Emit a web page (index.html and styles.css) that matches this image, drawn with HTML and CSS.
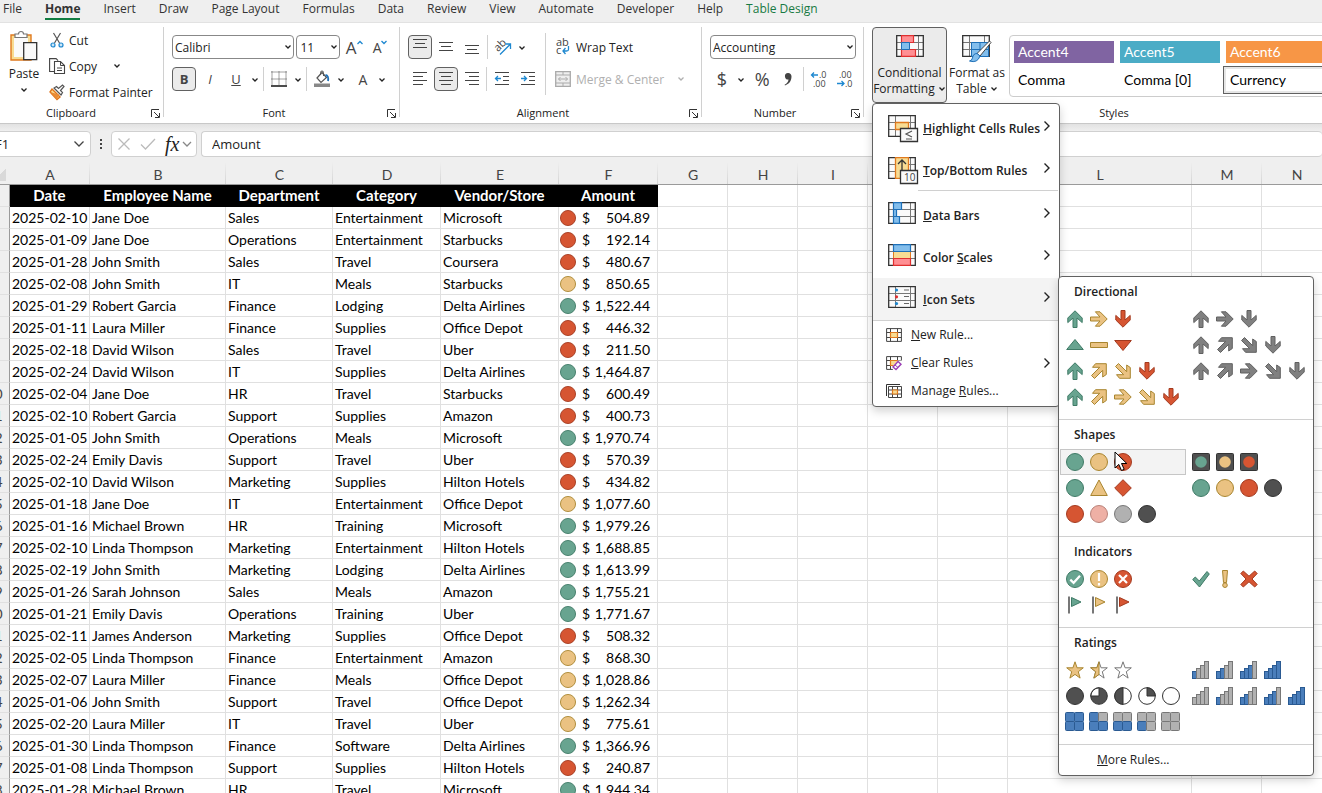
FILE: index.html
```html
<!DOCTYPE html>
<html lang="en">
<head>
    <meta charset="UTF-8">
    <meta name="viewport" content="width=device-width, initial-scale=1.0">
    <title>Expenses - Icon Sets</title>
    <link rel="stylesheet" href="styles.css">
</head>
<body>
    <!-- shared icons -->
    <svg class="defs" aria-hidden="true">
        <symbol id="chev" viewBox="0 0 8 8"><path d="M1.5 2.5 4 5 6.5 2.5" fill="none" stroke="currentColor" stroke-width="1.3"/></symbol>
        <symbol id="right" viewBox="0 0 8 12"><path d="M1.5 1.5 6 6 1.5 10.5" fill="none" stroke="currentColor" stroke-width="1.4"/></symbol>
        <symbol id="launch" viewBox="0 0 9 9"><path d="M8 .5H.5V8M3 3l5 5M8.5 4v4.5H4" fill="none" stroke="#333"/></symbol>
        <symbol id="grid" viewBox="0 0 28 22"><path d="M.7.7h26.6v20.6H.7z" fill="#fafafa"/><path d="M.7 7.5h26.6M.7 14.5h26.6M7.5.7v20.6M22.5.7v20.6" fill="none" stroke="#777"/><path d="M.7.7h26.6v20.6H.7z" fill="none" stroke="#333" stroke-width="1.3"/></symbol>
        <symbol id="up" viewBox="0 0 18 18"><path d="M9 .8 16.2 8v4.6L11 8v9.5H7V8l-5.2 4.6V8z"/></symbol>
        <symbol id="side" viewBox="0 0 18 18"><path d="M17.2 9 10 16.2H5.4L10 11H.5V7H10L5.4 1.8H10z"/></symbol>
        <symbol id="down" viewBox="0 0 18 18"><path d="M9 17.2 1.8 10V5.4L7 10V.5h4V10l5.2-4.6V10z"/></symbol>
        <symbol id="upright" viewBox="0 0 18 18"><path d="M5.5 1.7h10.8v10.8L12.7 15V8.3l-8.2 8.2-3-3 8.2-8.2H2.5z"/></symbol>
        <symbol id="downright" viewBox="0 0 18 18"><path d="M5.5 16.3h10.8V5.5L12.7 3v6.7L4.5 1.5l-3 3 8.2 8.2H2.5z"/></symbol>
        <symbol id="triup" viewBox="0 0 18 18"><path d="M9 3.5 17.3 13.5H.7z"/></symbol>
        <symbol id="tridown" viewBox="0 0 18 18"><path d="M9 14.5 17.3 4.5H.7z"/></symbol>
        <symbol id="dash" viewBox="0 0 18 18"><path d="M.5 6.5h17v5H.5z"/></symbol>
        <symbol id="circle" viewBox="0 0 18 18"><circle cx="9" cy="9" r="8.5"/></symbol>
        <symbol id="triangle" viewBox="0 0 18 18"><path d="M9 1 17.3 16.5H.7z" stroke-linejoin="round"/></symbol>
        <symbol id="diamond" viewBox="0 0 18 18"><path d="M9 .7 17.3 9 9 17.3.7 9z" stroke-linejoin="round"/></symbol>
        <symbol id="light" viewBox="0 0 18 18"><rect x=".5" y=".5" width="17" height="17" rx="1" fill="#505050" stroke="#333"/><circle cx="9" cy="9" r="5.8" stroke="none"/></symbol>
        <symbol id="okc" viewBox="0 0 18 18"><circle cx="9" cy="9" r="8.5"/><path d="M4.3 9.6 7.6 12.8 14 5.8" fill="none" stroke="#fff" stroke-width="2.2"/></symbol>
        <symbol id="warnc" viewBox="0 0 18 18"><circle cx="9" cy="9" r="8.5"/><path d="M9 3v8M9 13v2.5" stroke="#fff" stroke-width="2.2"/></symbol>
        <symbol id="badc" viewBox="0 0 18 18"><circle cx="9" cy="9" r="8.5"/><path d="m5 5 8 8M13 5l-8 8" stroke="#fff" stroke-width="2.2"/></symbol>
        <symbol id="ok" viewBox="0 0 18 18"><path d="M.7 9.5 3.3 7l4 4L15 1.5 17.3 4 7.5 17z"/></symbol>
        <symbol id="warn" viewBox="0 0 18 18"><path d="M6.5.5h5l-1 12h-3z"/><circle cx="9" cy="15.2" r="2.3"/></symbol>
        <symbol id="bad" viewBox="0 0 18 18"><path d="M3.3 1 9 6.2 14.7 1 17.2 3.5 12 9l5.2 5.5-2.5 2.5L9 11.8 3.3 17 .8 14.5 6 9 .8 3.5z"/></symbol>
        <symbol id="flag" viewBox="0 0 18 18"><path d="M3 .5v17" stroke="#777" stroke-width="2"/><path d="M5.5 1.500 15 6 5.500 10.500z"/></symbol>
        <symbol id="star" viewBox="0 0 18 18"><path d="m9 .8 2.1 6h6.2l-5 3.900 1.8 6.400L9 13.400l-5.100 3.700 1.800-6.400-5-3.900h6.200z"/></symbol>
        <symbol id="starhalf" viewBox="0 0 18 18"><path d="m9 .8 2.100 6h6.200l-5 3.900 1.800 6.400L9 13.400l-5.100 3.700 1.800-6.400-5-3.900h6.200z" fill="#fff" stroke="#777"/><path d="M9 .8v12.600l-5.100 3.700 1.800-6.400-5-3.900h6.200z"/></symbol>
        <symbol id="pie3" viewBox="0 0 18 18"><circle cx="9" cy="9" r="8.3" fill="#505050"/><path d="M9 9H.9A8.1 8.1 0 0 1 9 .9z" fill="#fff"/></symbol>
        <symbol id="pie2" viewBox="0 0 18 18"><circle cx="9" cy="9" r="8.3" fill="#fff"/><path d="M9 .7a8.3 8.3 0 0 0 0 16.6z"/></symbol>
        <symbol id="pie1" viewBox="0 0 18 18"><circle cx="9" cy="9" r="8.3" fill="#fff"/><path d="M9 9V.7A8.3 8.3 0 0 1 17.3 9z"/></symbol>
    </svg>

    <nav class="tabs">
        <a href="#">File</a>
        <a href="#" class="active">Home</a>
        <a href="#">Insert</a>
        <a href="#">Draw</a>
        <a href="#">Page Layout</a>
        <a href="#">Formulas</a>
        <a href="#">Data</a>
        <a href="#">Review</a>
        <a href="#">View</a>
        <a href="#">Automate</a>
        <a href="#">Developer</a>
        <a href="#">Help</a>
        <a href="#" class="design">Table Design</a>
    </nav>

    <div class="ribbon">
        <!-- Clipboard -->
        <section class="group clipboard">
            <div class="tools">
                <button class="paste">
                    <svg width="28" height="32" viewBox="0 0 28 32"><path d="M1 5h20v25H1z" fill="#f8dc93" stroke="#e07a1f" stroke-width="1.4"/><path d="M4 8h14v19H4z" fill="#fafafa"/><path d="M5 7.500V4h3.500a2.500 2.500 0 0 1 5 0H17v3.500z" fill="#fff" stroke="#777" stroke-width="1.2"/><path d="M13.700 12.700h13v17h-13z" fill="#fafafa" stroke="#333" stroke-width="1.3"/></svg>
                    <span>Paste</span>
                    <svg class="chev"><use href="#chev"/></svg>
                </button>
                <div class="stack">
                    <button><svg width="16" height="16" viewBox="0 0 16 16"><path d="M4.500 1 10.500 11M11.500 1 5.500 11" stroke="#555" stroke-width="1.2"/><circle cx="4" cy="13" r="2" fill="#cde6f7" stroke="#1e88d0" stroke-width="1.2"/><circle cx="12" cy="13" r="2" fill="#cde6f7" stroke="#1e88d0" stroke-width="1.2"/></svg>Cut</button>
                    <button><svg width="16" height="16" viewBox="0 0 16 16"><path d="M5 13.500H.6V.6h6.500l2 2" fill="none" stroke="#444" stroke-width="1.1"/><path d="M5.500 3.500h6l4 4v8h-10z" fill="#fff" stroke="#444" stroke-width="1.1"/><path d="M11.500 3.500v4h4M8 10h5M8 12.500h5" fill="none" stroke="#444"/></svg>Copy<svg class="chev far"><use href="#chev"/></svg></button>
                    <button><svg width="16" height="16" viewBox="0 0 16 16"><path d="M3 5 11 13 8 15.500 1 8z" fill="#f8dc93" stroke="#e0731a" stroke-width="1.400"/><path d="M1 8l7 7.500 2-5z" fill="#e98b36"/><path d="M5 4l7 7 1.500-2.500-2-2 3.500-4-1.500-1.500-4 3.500L7.500 2.500z" fill="#fff" stroke="#555" stroke-width="1.200"/></svg>Format Painter</button>
                </div>
            </div>
            <footer>Clipboard<button class="launch" aria-label="Clipboard settings"><svg><use href="#launch"/></svg></button></footer>
        </section>

        <!-- Font -->
        <section class="group font">
            <div class="tools rows">
                <div class="row">
                    <select class="name" aria-label="Font"><option>Calibri</option></select>
                    <select class="size" aria-label="Font size"><option>11</option></select>
                    <button class="tool" aria-label="Increase font size"><span class="biga">A</span><svg width="6" height="5" viewBox="0 0 6 5"><path d="M.5 4 3 1.500 5.500 4" fill="none" stroke="#1e88d0" stroke-width="1.300"/></svg></button>
                    <button class="tool" aria-label="Decrease font size"><span class="smalla">A</span><svg width="6" height="5" viewBox="0 0 6 5"><path d="M.5 1 3 3.500 5.500 1" fill="none" stroke="#1e88d0" stroke-width="1.300"/></svg></button>
                </div>
                <div class="row">
                    <button class="tool on"><b>B</b></button>
                    <button class="tool"><i>I</i></button>
                    <button class="tool"><u>U</u></button>
                    <button class="drop" aria-label="Underline options"><svg class="chev"><use href="#chev"/></svg></button>
                    <span class="bar"></span>
                    <button class="tool" aria-label="Borders"><svg width="16" height="16" viewBox="0 0 16 16"><path d="M.5 1h15M.5 8h15M1 .5v13M8 .5v13M15 .5v13" fill="none" stroke="#444" stroke-dasharray="1 1"/><path d="M0 15h16" stroke="#111" stroke-width="1.500"/></svg></button>
                    <button class="drop" aria-label="Border options"><svg class="chev"><use href="#chev"/></svg></button>
                    <span class="bar"></span>
                    <button class="tool" aria-label="Fill color"><svg width="16" height="16" viewBox="0 0 16 16"><path d="M3 7 8 1.500l4.500 5L7 11.500z" fill="#fff" stroke="#555" stroke-width="1.200"/><path d="M6.500 4V1.500a1.500 1.500 0 0 1 3 0V5" fill="none" stroke="#555"/><path d="M11.500 4q3.500.5 2.500 6" fill="none" stroke="#1e70b8" stroke-width="1.800"/><path d="M0 12.500h16V16H0z" fill="#888"/></svg></button>
                    <button class="drop" aria-label="Fill options"><svg class="chev"><use href="#chev"/></svg></button>
                    <button class="tool color">A</button>
                    <button class="drop" aria-label="Font color options"><svg class="chev"><use href="#chev"/></svg></button>
                </div>
            </div>
            <footer>Font<button class="launch" aria-label="Font settings"><svg><use href="#launch"/></svg></button></footer>
        </section>

        <!-- Alignment -->
        <section class="group align">
            <div class="tools">
                <div class="rows">
                    <div class="row">
                        <button class="tool on" aria-label="Top align"><svg width="16" height="16" viewBox="0 0 16 16"><path d="M1 .5h14M3 4.500h10M1 8.500h14" stroke="#444"/></svg></button>
                        <button class="tool" aria-label="Middle align"><svg width="16" height="16" viewBox="0 0 16 16"><path d="M1 3.500h14M3 7.500h10M1 11.500h14" stroke="#444"/></svg></button>
                        <button class="tool" aria-label="Bottom align"><svg width="16" height="16" viewBox="0 0 16 16"><path d="M1 6.500h14M3 10.500h10M1 14.500h14" stroke="#444"/></svg></button>
                        <span class="bar"></span>
                        <button class="tool" aria-label="Orientation"><svg width="18" height="18" viewBox="0 0 18 18"><text x="-6" y="3" class="ab" transform="translate(6 8) rotate(-45)">ab</text><path d="M6 16.500 16 6.500M11.500 6H16.500V11" fill="none" stroke="#1e88d0" stroke-width="1.300"/></svg></button>
                        <button class="drop" aria-label="Orientation options"><svg class="chev"><use href="#chev"/></svg></button>
                    </div>
                    <div class="row">
                        <button class="tool" aria-label="Align left"><svg width="16" height="16" viewBox="0 0 16 16"><path d="M1 1.500h14M1 5.500h10M1 9.500h14M1 13.500h10" stroke="#444"/></svg></button>
                        <button class="tool on" aria-label="Center"><svg width="16" height="16" viewBox="0 0 16 16"><path d="M1 1.500h14M3 5.500h10M1 9.500h14M3 13.500h10" stroke="#444"/></svg></button>
                        <button class="tool" aria-label="Align right"><svg width="16" height="16" viewBox="0 0 16 16"><path d="M1 1.500h14M5 5.500h10M1 9.500h14M5 13.500h10" stroke="#444"/></svg></button>
                        <span class="bar"></span>
                        <button class="tool" aria-label="Decrease indent"><svg width="16" height="16" viewBox="0 0 16 16"><path d="M1 1.500h14M9 5.500h6M9 9.500h6M1 13.500h14" stroke="#444"/><path d="M7 7.500H1.500M4 5 1.500 7.500 4 10" fill="none" stroke="#1e88d0" stroke-width="1.300"/></svg></button>
                        <button class="tool" aria-label="Increase indent"><svg width="16" height="16" viewBox="0 0 16 16"><path d="M1 1.500h14M9 5.500h6M9 9.500h6M1 13.500h14" stroke="#444"/><path d="M1 7.500h5.500M4 5l2.500 2.500L4 10" fill="none" stroke="#1e88d0" stroke-width="1.300"/></svg></button>
                    </div>
                </div>
                <span class="bar tall"></span>
                <div class="rows wide">
                    <button class="label"><svg width="16" height="16" viewBox="0 0 16 16"><text x="1" y="7" class="ab">ab</text><text x="1" y="15" class="ab">c</text><path d="M13.500 7v3.500q0 1.500-2 1.500H8M10.500 9 8 12l2.500 3" fill="none" stroke="#1e88d0" stroke-width="1.300"/></svg>Wrap Text</button>
                    <button class="label" disabled><svg width="16" height="16" viewBox="0 0 16 16"><path d="M.7.7h14.600v14.600H.7z" fill="#eee" stroke="#aaa" stroke-width="1.300"/><path d="M1 4h14M1 12h14M8 1v3M8 12v3M3.500 8h9M5.500 6l-2 2 2 2M10.500 6l2 2-2 2" fill="none" stroke="#aaa"/></svg>Merge &amp; Center<svg class="chev far"><use href="#chev"/></svg></button>
                </div>
            </div>
            <footer>Alignment<button class="launch" aria-label="Alignment settings"><svg><use href="#launch"/></svg></button></footer>
        </section>

        <!-- Number -->
        <section class="group number">
            <div class="tools rows">
                <div class="row"><select class="format" aria-label="Number format"><option>Accounting</option></select></div>
                <div class="row">
                    <button class="tool sym">$</button>
                    <button class="drop" aria-label="Currency options"><svg class="chev"><use href="#chev"/></svg></button>
                    <button class="tool sym pct">%</button>
                    <button class="tool" aria-label="Comma style"><svg width="10" height="14" viewBox="0 0 10 14"><path d="M5 1a3.300 3.300 0 0 1 3.500 3.500C8.500 9 6 12 2 13.500l-.4-.8C4 11.500 5.300 10 5.500 7.600A3.300 3.300 0 1 1 5 1z" fill="#444"/></svg></button>
                    <span class="bar"></span>
                    <button class="tool" aria-label="Increase decimal"><svg width="17" height="18" viewBox="0 0 17 18"><text x="9" y="8" class="dec">.0</text><text x="3" y="17" class="dec">.00</text><path d="M8 5H1.500M4 2.500 1.500 5 4 7.500" fill="none" stroke="#1e88d0" stroke-width="1.300"/></svg></button>
                    <button class="tool" aria-label="Decrease decimal"><svg width="17" height="18" viewBox="0 0 17 18"><text x="3" y="8" class="dec">.00</text><text x="9" y="17" class="dec">.0</text><path d="M1 13.500h7M5.500 11 8 13.500 5.500 16" fill="none" stroke="#1e88d0" stroke-width="1.300"/></svg></button>
                </div>
            </div>
            <footer>Number<button class="launch" aria-label="Number settings"><svg><use href="#launch"/></svg></button></footer>
        </section>

        <!-- Styles -->
        <section class="group styles">
            <div class="tools">
                <button class="big open">
                    <svg width="28" height="22" viewBox="0 0 28 22"><use href="#grid"/><path d="M5.500.7h12v6.800h-12zM5.500 14.500h14v6.800h-14z" fill="#ff8f93" stroke="#e03030" stroke-width="1.200"/><path d="M5.500 7.500h8v7h-8z" fill="#83beec" stroke="#1e70b8"/></svg>
                    <span>Conditional<br>Formatting <svg class="chev"><use href="#chev"/></svg></span>
                </button>
                <button class="big">
                    <svg width="30" height="28" viewBox="0 0 30 28"><use href="#grid" width="28" height="22"/><path d="M9.500 7.500h17v14h-17z" fill="#83beec" stroke="#1e70b8"/><path d="M9.500 14.500h17M18 7.500v14" stroke="#1e70b8"/><path d="M29 7.500 18 21l-3-2.500L27.500 6z" fill="#fff" stroke="#444"/><path d="M15 18.500q-4 0-4.500 4.500-1 3-3 3 8 2.500 10.500-5z" fill="#83beec" stroke="#1e70b8"/></svg>
                    <span>Format as<br>Table <svg class="chev"><use href="#chev"/></svg></span>
                </button>
                <div class="gallery">
                    <button class="accent4">Accent4</button>
                    <button class="accent5">Accent5</button>
                    <button class="accent6">Accent6</button>
                    <button>Comma</button>
                    <button>Comma [0]</button>
                    <button class="picked">Currency</button>
                </div>
            </div>
            <footer>Styles</footer>
        </section>
    </div>

    <div class="formulabar">
        <button class="namebox">F1<svg width="12" height="12" viewBox="0 0 12 12"><path d="M1.500 3.500 6 8l4.500-4.500" fill="none" stroke="#444" stroke-width="1.300"/></svg></button>
        <span class="dots"></span>
        <div class="fx">
            <button aria-label="Cancel"><svg width="14" height="14" viewBox="0 0 14 14"><path d="m1.500 1.500 11 11M12.500 1.500l-11 11" stroke="#bbb" stroke-width="1.300"/></svg></button>
            <button aria-label="Enter"><svg width="16" height="14" viewBox="0 0 16 14"><path d="m1 7.500 4.500 4.500L15 2" fill="none" stroke="#bbb" stroke-width="1.300"/></svg></button>
            <button class="fn"><i>fx</i></button>
            <button aria-label="Function list"><svg width="10" height="10" viewBox="0 0 10 10"><path d="m1 3 4 4 4-4" fill="none" stroke="#888" stroke-width="1.300"/></svg></button>
        </div>
        <input type="text" value="Amount" aria-label="Formula bar">
    </div>

    <table class="sheet">
        <colgroup>
            <col class="c30"><col class="c80"><col class="c136"><col class="c107"><col class="c108"><col class="c118"><col class="c99">
            <col class="c70"><col class="c70"><col class="c70"><col class="c70"><col class="c70"><col class="c184"><col class="c70"><col class="c70">
        </colgroup>
        <thead>
            <tr>
                <th class="corner"></th><th>A</th><th>B</th><th>C</th><th>D</th><th>E</th><th>F</th><th>G</th><th>H</th><th>I</th><th>J</th><th>K</th><th>L</th><th>M</th><th>N</th>
            </tr>
        </thead>
        <tbody id="rows"></tbody>
    </table>

    <!-- Conditional Formatting menu -->
    <div class="menu">
        <button class="item"><svg width="30" height="28" viewBox="0 0 30 28"><use href="#grid" width="28" height="22"/><path d="M7.500 7.500h13v7h-13z" fill="#f8dc93" stroke="#e07a1f" stroke-width="1.300"/><path d="M12.500 13.500h17v13h-17z" fill="#fafafa" stroke="#333" stroke-width="1.300"/><path d="m24 16-6 3 6 3M18 24h6" fill="none" stroke="#555" stroke-width="1.200"/></svg><span><u>H</u>ighlight Cells Rules</span><svg class="right"><use href="#right"/></svg></button>
        <button class="item"><svg width="30" height="28" viewBox="0 0 30 28"><use href="#grid" width="28" height="22"/><path d="M7.500.7h13v20.600h-13z" fill="#f8dc93" stroke="#e07a1f" stroke-width="1.300"/><path d="M14 16V3M10 7l4-4 4 4" fill="none" stroke="#333" stroke-width="1.300"/><path d="M12.500 13.500h17v13h-17z" fill="#fafafa" stroke="#333" stroke-width="1.300"/><text x="16" y="24" class="ten">10</text></svg><span><u>T</u>op/Bottom Rules</span><svg class="right"><use href="#right"/></svg></button>
        <hr class="inset">
        <button class="item"><svg width="30" height="28" viewBox="0 0 30 28"><use href="#grid" width="28" height="22"/><path d="M5.500.7h8v6.800h-8zM5.500 7.500h3v7h-3zM5.500 14.500h6v6.800h-6z" fill="#83beec" stroke="#1e70b8" stroke-width="1.200"/></svg><span><u>D</u>ata Bars</span><svg class="right"><use href="#right"/></svg></button>
        <button class="item"><svg width="30" height="28" viewBox="0 0 30 28"><use href="#grid" width="28" height="22"/><path d="M5.500 7.500h17v7h-17z" fill="#f8dc93" stroke="#e07a1f"/><path d="M5.500.7h17v6.800h-17z" fill="#83beec" stroke="#1e70b8" stroke-width="1.200"/><path d="M5.500 14.500h17v6.800h-17z" fill="#ff8f93" stroke="#e03030" stroke-width="1.200"/></svg><span>Color <u>S</u>cales</span><svg class="right"><use href="#right"/></svg></button>
        <button class="item hover"><svg width="30" height="28" viewBox="0 0 30 28"><use href="#grid" width="28" height="22"/><path d="M8 1.400h14v5.500H8zM8 8h14v6H8zM8 15h14v5.600H8z" fill="#fafafa"/><path d="M16 4h5M16 10.500h5M16 17.500h5" stroke="#666"/><circle cx="8.500" cy="4" r="1.600" fill="#1e88d0"/><circle cx="8.500" cy="10.800" r="1.600" fill="#e03030"/><circle cx="8.500" cy="17.600" r="1.600" fill="#1e88d0"/></svg><span><u>I</u>con Sets</span><svg class="right"><use href="#right"/></svg></button>
        <hr>
        <button class="item small"><svg width="16" height="14" viewBox="0 0 16 14"><path d="M.6.6h14.800v12.800H.6zM.6 4.500h14.800M.6 9.500h14.800M4.500.6v12.800M11.500.6v12.800" fill="#fff" stroke="#444"/><path d="M4.500 4.500h7v5h-7z" fill="#f8dc93" stroke="#e07a1f" stroke-width="1.200"/></svg><span><u>N</u>ew Rule...</span></button>
        <button class="item small"><svg width="16" height="14" viewBox="0 0 16 14"><path d="M.6.6h14.800v12.800H.6zM.6 4.500h14.800M.6 9.500h14.800M4.500.6v12.800M11.500.6v12.800" fill="#fff" stroke="#444"/><path d="M4.500 4.500h7v5h-7z" fill="#f8dc93" stroke="#e07a1f" stroke-width="1.200"/><path d="m6 11 6-6.500h4V14H7z" fill="#fff"/><path d="m7 11 5-5.500 3 2.800L10 13.500z" fill="#fff" stroke="#9b3fb5" stroke-width="1.400"/><path d="m9 9 3 2.500" stroke="#9b3fb5"/></svg><span><u>C</u>lear Rules</span><svg class="right"><use href="#right"/></svg></button>
        <button class="item small"><svg width="16" height="14" viewBox="0 0 16 14"><path d="M.5 12V.5H14" fill="none" stroke="#333"/><path d="M2.500 2.500h13v11h-13zM2.500 6h13M2.500 10h13M6.500 2.500v11M11.500 2.500v11" fill="#fff" stroke="#444"/><path d="M6.500 6h5v4h-5z" fill="#f8dc93" stroke="#e07a1f" stroke-width="1.200"/></svg><span>Manage <u>R</u>ules...</span></button>
    </div>

    <!-- Icon Sets submenu, filled in by script.js -->
    <div class="submenu">
        <h2>Directional</h2>
        <div class="sets" id="directional"></div>
        <h2>Shapes</h2>
        <div class="sets" id="shapes"></div>
        <h2>Indicators</h2>
        <div class="sets" id="indicators"></div>
        <h2>Ratings</h2>
        <div class="sets" id="ratings"></div>
        <button class="more"><span><u>M</u>ore Rules...</span></button>
    </div>

    <svg class="cursor" width="14" height="21" viewBox="0 0 14 21"><path d="M1 1v16l3.800-3.600L7.500 19.500l2.700-1.200L7.500 12.500h5.300z" fill="#fff" stroke="#000"/></svg>

    <script src="script.js"></script>
</body>
</html>
```
FILE: styles.css
```css
* {
    box-sizing: border-box;
}
body {
    margin: 0;
    height: 100vh;
    overflow: hidden;
    position: relative;
    background: #efefef;
    color: #222;
    font-family: "Open Sans", "Noto Sans", sans-serif;
    font-size: 12px;
}
button, select, input {
    font: inherit;
    color: inherit;
}
button {
    padding: 0;
    border: 0;
    background: none;
}
svg {
    flex: none;
    overflow: visible;
}
.defs {
    display: none;
}
.chev {
    width: 8px;
    height: 8px;
}

/* tabs */
.tabs {
    display: flex;
    gap: 23px;
    height: 23px;
    padding-left: 3px;
    border-bottom: 1px solid #e2e2e2;
}
.tabs a {
    height: 20px;
    line-height: 17px;
    color: #333;
    text-decoration: none;
    white-space: nowrap;
}
.tabs .active {
    font-weight: bold;
    border-bottom: 2px solid #107c41;
}
.tabs .design {
    color: #187a43;
}

/* ribbon */
.ribbon {
    display: flex;
    height: 101px;
    padding-top: 4px;
    overflow: hidden;
    background: #fff;
    border-bottom: 1px solid #c8c8c8;
}
.group {
    flex: none;
    background: linear-gradient(#d0d0d0, #d0d0d0) no-repeat right top / 1px 90px;
}
.clipboard { width: 164px; }
.font { width: 236px; }
.align { width: 302px; }
.number { width: 162px; }
.styles {
    width: 500px;
    background: none;
}
.tools {
    display: flex;
    height: 77px;
    padding: 0 8px;
}
.group footer {
    position: relative;
    height: 18px;
    line-height: 18px;
    padding-right: 16px;
    text-align: center;
    font-size: 11px;
}
.clipboard footer {
    padding-right: 22px;
}
.styles footer {
    padding: 0;
}
.launch {
    position: absolute;
    right: 4px;
    top: 5px;
    width: 9px;
    height: 9px;
    line-height: 0;
}
.launch svg {
    width: 9px;
    height: 9px;
}
.paste {
    display: flex;
    flex-direction: column;
    align-items: center;
    width: 28px;
    margin: 3px 11px 0 2px;
    line-height: 16px;
}
.paste span {
    margin: 4px 0;
}
.stack button {
    display: flex;
    align-items: center;
    gap: 4px;
    height: 26px;
    white-space: nowrap;
}
.far {
    margin-left: 12px;
}
.label .far {
    margin-left: 8px;
}
.rows {
    display: flex;
    flex-direction: column;
    gap: 8px;
    padding-top: 8px;
}
.row {
    display: flex;
    align-items: center;
    height: 24px;
    gap: 2px;
}
.tool {
    display: flex;
    align-items: center;
    justify-content: center;
    width: 24px;
    height: 24px;
    border-radius: 4px;
    font-size: 13px;
    color: #444;
}
.tool.on {
    background: #ebebeb;
    border: 1px solid #616161;
}
.biga { font-size: 17px; }
.smalla { font-size: 14px; }
.biga + svg, .smalla + svg {
    align-self: flex-start;
    margin-top: 5px;
}
.color { font-size: 14px; }
.font .color {
    margin-left: 3px;
}
.sym { font-size: 18px; }
.pct { margin-left: 3px; }
.drop {
    width: 10px;
    height: 24px;
    text-align: center;
}
.bar {
    width: 1px;
    height: 24px;
    margin: 0 1px;
    background: #d0d0d0;
}
.tall {
    height: 62px;
    margin: 6px 9px 0 5px;
}
.align .tools .rows { width: 132px; }
.align .tools .wide { width: auto; }
.label {
    display: flex;
    align-items: center;
    gap: 5px;
    height: 24px;
    white-space: nowrap;
}
.label:disabled {
    color: #b0b0b0;
}
.ab {
    font-size: 11px;
    fill: #444;
}
.dec {
    font-size: 9px;
    fill: #444;
}
.ten {
    font-size: 10px;
    font-weight: normal;
    fill: #444;
}
select {
    appearance: none;
    height: 24px;
    padding: 0 2px;
    border: 1px solid #888;
    border-radius: 4px;
    background: #fff url("data:image/svg+xml,%3Csvg xmlns='http://www.w3.org/2000/svg' width='8' height='8'%3E%3Cpath d='M1.500 2.500 4 5 6.500 2.500' fill='none' stroke='%23222' stroke-width='1.300'/%3E%3C/svg%3E") no-repeat right 1px center;
}
.name { width: 123px; }
.size {
    width: 44px;
    padding: 0 3px;
}
.format { width: 147px; }
.big {
    display: flex;
    flex-direction: column;
    align-items: center;
    gap: 8px;
    height: 76px;
    padding-top: 8px;
    line-height: 16px;
    white-space: nowrap;
    width: 60px;
}
.big + .big > svg {
    margin-bottom: -6px;
}
.open {
    width: 75px;
    padding-top: 7px;
    border: 1px solid #616161;
    border-radius: 4px;
    background: #ebebeb;
}
.gallery {
    display: grid;
    grid-template-columns: 100px 100px 100px;
    grid-template-rows: 22px 28px;
    gap: 3px 6px;
    flex: none;
    height: 62px;
    width: 340px;
    margin: 8px 0 0 2px;
    padding: 5px 4px;
    border: 1px solid #ccc;
    border-radius: 4px;
    font-family: Lato, sans-serif;
    font-size: 14px;
}
.gallery button {
    padding: 0 0 2px 4px;
    text-align: left;
    color: #000;
}
.gallery .accent4 { background: #8064a2; color: #fff; }
.gallery .accent5 { background: #4bacc6; color: #fff; }
.gallery .accent6 { background: #f79646; color: #fff; }
.gallery .picked {
    margin-left: -3px;
    border: 1px solid #616161;
    box-shadow: inset 0 0 0 2px #e6e6e6;
    padding-left: 6px;
}

/* formula bar */
.formulabar {
    display: flex;
    height: 38px;
    padding-top: 7px;
    background: linear-gradient(#e2e2e2, #efefef 7px);
    font-size: 13px;
}
.formulabar input, .namebox, .fx {
    height: 26px;
    background: #fff;
    border: 1px solid #d0d0d0;
    border-radius: 4px;
}
.namebox {
    display: flex;
    align-items: center;
    justify-content: space-between;
    width: 111px;
    margin-left: -20px;
    padding: 0 5px 0 14px;
}
.dots {
    width: 2px;
    height: 10px;
    margin: 8px 9px;
    background: repeating-linear-gradient(#444 0 2px, transparent 2px 4px);
}
.fx {
    display: flex;
    align-items: center;
    gap: 9px;
    width: 86px;
    padding-left: 5px;
}
.fx button {
    line-height: 0;
}
.fx .fn {
    font: 20px "Liberation Serif", serif;
    line-height: 20px;
    margin-right: -6px;
}
.formulabar input {
    flex: 1;
    margin-left: 4px;
    padding: 0 10px;
    border-right: 0;
}

/* sheet */
.sheet {
    width: 1352px;
    margin-left: -20px;
    table-layout: fixed;
    border-spacing: 0;
    background: #fff;
    color: #000;
    font-family: Lato, sans-serif;
    font-size: 14px;
}
.c30 { width: 30px; }
.c70 { width: 70px; }
.c80 { width: 80px; }
.c99 { width: 99px; }
.c107 { width: 107px; }
.c108 { width: 108px; }
.c118 { width: 118px; }
.c136 { width: 136px; }
.c184 { width: 184px; }
.sheet th, .sheet td {
    height: 22px;
    padding: 0 2px;
    line-height: 21px;
    border-right: 1px solid #e0e0e0;
    border-bottom: 1px solid #e0e0e0;
    white-space: nowrap;
}
.sheet thead th {
    height: 23px;
    background: linear-gradient(#efefef, #d4d4d4) no-repeat right / 1px 100% #efefef;
    border-right: 0;
    border-bottom-color: #9a9a9a;
    color: #444;
    font-weight: normal;
    padding-top: 3px;
    line-height: 19px;
}
.sheet thead .corner {
    background: linear-gradient(135deg, #efefef 50%, #d9d9d9 50%) no-repeat 14px 7px / 12px 12px #efefef;
}
.sheet tbody th {
    padding: 0;
    background: #efefef;
    border-right-color: #9a9a9a;
    color: #444;
    font-weight: normal;
    text-align: center;
}
.sheet .head {
    background: #000;
    border-color: #000;
    color: #fff;
    font-size: 15px;
    font-weight: bold;
    text-align: center;
}
.money {
    display: flex;
    align-items: center;
    padding: 0 5px 0 0;
}
.money svg {
    width: 16px;
    height: 16px;
    margin: 0 6px 0 -1px;
}
.money span {
    margin-left: auto;
}

/* menus */
.menu, .submenu {
    position: absolute;
    background: #fff;
    border: 1px solid #616161;
    border-radius: 4px;
    box-shadow: 0 4px 10px rgba(0, 0, 0, 0.18);
}
.menu {
    left: 872px;
    top: 103px;
    width: 188px;
    padding: 3px 0 1px;
}
.menu hr {
    height: 1px;
    margin: 0;
    border: 0;
    background: #d0d0d0;
}
.menu .inset {
    margin: -1px 1px 3px 45px;
}
.item {
    display: flex;
    width: 100%;
    height: 42px;
    padding: 8px 8px 0 15px;
    font-weight: 600;
    line-height: 27px;
    white-space: nowrap;
}
.item span {
    margin-left: 5px;
}
.item .right {
    width: 8px;
    height: 12px;
    margin: 5px 0 0 auto;
}
.hover {
    background: #f3f3f3;
}
.item.small {
    height: 28px;
    padding: 0 8px 1px 13px;
    align-items: center;
    font-weight: normal;
}
.item.small span {
    margin-left: 9px;
}
.item.small .right {
    margin-top: 0;
}
.submenu {
    left: 1058px;
    top: 276px;
    width: 256px;
}
.submenu h2 {
    margin: 0;
    padding-left: 15px;
    font-size: 12px;
    font-weight: 600;
    line-height: 29px;
}
.sets {
    display: grid;
    grid-template-columns: 126px 126px;
    padding: 0 1px 9px;
    border-bottom: 1px solid #d0d0d0;
}
.sets button {
    display: flex;
    align-items: center;
    gap: 6px;
    height: 26px;
    padding-left: 5px;
    border: 1px solid transparent;
}
.sets .hot {
    background: #f3f3f3;
    border-color: #c6c6c6;
}
.sets svg {
    width: 18px;
    height: 18px;
}
.more {
    width: 100%;
    height: 30px;
    padding: 0 0 2px 38px;
    text-align: left;
}
.cursor {
    position: absolute;
    left: 1114px;
    top: 451px;
}

/* icon colours */
.green { fill: #68a490; stroke: #3f7a66; }
.yellow { fill: #eac282; stroke: #a8852f; }
.red { fill: #d65532; stroke: #a33a1f; }
.gray { fill: #808080; stroke: #606060; }
.pink { fill: #eeb0a5; stroke: #b9837a; }
.silver { fill: #b1b1b1; stroke: #777; }
.black { fill: #505050; stroke: #333; }
.white { fill: #fff; stroke: #777; }
.hollow { fill: #fff; stroke: #333; }
.blue { fill: #4a7ebb; stroke: #2a5a92; }
```
FILE: script.js
```js
// rows of the expense table: date, name, department, category, vendor, amount, icon
const expenses = [
    ["2025-02-10", "Jane Doe", "Sales", "Entertainment", "Microsoft", "504.89", "red"],
    ["2025-01-09", "Jane Doe", "Operations", "Entertainment", "Starbucks", "192.14", "red"],
    ["2025-01-28", "John Smith", "Sales", "Travel", "Coursera", "480.67", "red"],
    ["2025-02-08", "John Smith", "IT", "Meals", "Starbucks", "850.65", "yellow"],
    ["2025-01-29", "Robert Garcia", "Finance", "Lodging", "Delta Airlines", "1,522.44", "green"],
    ["2025-01-11", "Laura Miller", "Finance", "Supplies", "Office Depot", "446.32", "red"],
    ["2025-02-18", "David Wilson", "Sales", "Travel", "Uber", "211.50", "red"],
    ["2025-02-24", "David Wilson", "IT", "Supplies", "Delta Airlines", "1,464.87", "green"],
    ["2025-02-04", "Jane Doe", "HR", "Travel", "Starbucks", "600.49", "red"],
    ["2025-02-10", "Robert Garcia", "Support", "Supplies", "Amazon", "400.73", "red"],
    ["2025-01-05", "John Smith", "Operations", "Meals", "Microsoft", "1,970.74", "green"],
    ["2025-02-24", "Emily Davis", "Support", "Travel", "Uber", "570.39", "red"],
    ["2025-02-10", "David Wilson", "Marketing", "Supplies", "Hilton Hotels", "434.82", "red"],
    ["2025-01-18", "Jane Doe", "IT", "Entertainment", "Office Depot", "1,077.60", "yellow"],
    ["2025-01-16", "Michael Brown", "HR", "Training", "Microsoft", "1,979.26", "green"],
    ["2025-02-10", "Linda Thompson", "Marketing", "Entertainment", "Hilton Hotels", "1,688.85", "green"],
    ["2025-02-19", "John Smith", "Marketing", "Lodging", "Delta Airlines", "1,613.99", "green"],
    ["2025-01-26", "Sarah Johnson", "Sales", "Meals", "Amazon", "1,755.21", "green"],
    ["2025-01-21", "Emily Davis", "Operations", "Training", "Uber", "1,771.67", "green"],
    ["2025-02-11", "James Anderson", "Marketing", "Supplies", "Office Depot", "508.32", "red"],
    ["2025-02-05", "Linda Thompson", "Finance", "Entertainment", "Amazon", "868.30", "yellow"],
    ["2025-02-07", "Laura Miller", "Finance", "Meals", "Office Depot", "1,028.86", "yellow"],
    ["2025-01-06", "John Smith", "Support", "Travel", "Office Depot", "1,262.34", "yellow"],
    ["2025-02-20", "Laura Miller", "IT", "Travel", "Uber", "775.61", "yellow"],
    ["2025-01-30", "Linda Thompson", "Finance", "Software", "Delta Airlines", "1,366.96", "green"],
    ["2025-01-08", "Linda Thompson", "Support", "Supplies", "Hilton Hotels", "240.87", "red"],
    ["2025-01-28", "Michael Brown", "HR", "Travel", "Microsoft", "1,944.34", "green"]
];

function icon(name, color) {
    return `<svg viewBox="0 0 18 18" class="${color}"><use href="#${name}"/></svg>`;
}

const empty = "<td></td>".repeat(8);
const titles = ["Date", "Employee Name", "Department", "Category", "Vendor/Store", "Amount"];
let html = "<tr><th>1</th>" + titles.map(t => `<td class="head">${t}</td>`).join("") + empty + "</tr>";
expenses.forEach((e, i) => {
    html += `<tr><th>${i + 2}</th>` + e.slice(0, 5).map(t => `<td>${t}</td>`).join("");
    html += `<td><div class="money">${icon("circle", e[6])}$<span>${e[5]}</span></div></td>${empty}</tr>`;
});
document.getElementById("rows").innerHTML = html;

// four signal bars, the first n of them blue
function bars(n) {
    let s = "";
    for (let i = 0; i < 4; i++) {
        const h = 7 + i * 3 + (i === 3 ? 1 : 0);
        s += `<rect x="${0.5 + i * 4}" y="${17.5 - h}" width="4" height="${h}" class="${i < n ? "blue" : "silver"}"/>`;
    }
    return `<svg viewBox="0 0 18 18">${s}</svg>`;
}

// four boxes, 1 = blue
function boxes(mask) {
    let s = "";
    for (let i = 0; i < 4; i++) {
        s += `<rect x="${(i % 2) * 9 - 0.5}" y="${(i > 1 ? 9 : 0) - 0.5}" width="9" height="9" rx="1" class="${mask[i] === "1" ? "blue" : "silver"}"/>`;
    }
    return `<svg viewBox="0 0 18 18">${s}</svg>`;
}

function draw(item) {
    const [name, arg] = item.split(":");
    if (name === "bars") return bars(Number(arg));
    if (name === "boxes") return boxes(arg);
    return icon(name, arg);
}

const sets = {
    directional: [
        "up:green side:yellow down:red", "up:gray side:gray down:gray",
        "triup:green dash:yellow tridown:red", "up:gray upright:gray downright:gray down:gray",
        "up:green upright:yellow downright:yellow down:red", "up:gray upright:gray side:gray downright:gray down:gray",
        "up:green upright:yellow side:yellow downright:yellow down:red"
    ],
    shapes: [
        "circle:green circle:yellow circle:red", "light:green light:yellow light:red",
        "circle:green triangle:yellow diamond:red", "circle:green circle:yellow circle:red circle:black",
        "circle:red circle:pink circle:silver circle:black"
    ],
    indicators: [
        "okc:green warnc:yellow badc:red", "ok:green warn:yellow bad:red",
        "flag:green flag:yellow flag:red"
    ],
    ratings: [
        "star:yellow starhalf:yellow star:white", "bars:1 bars:2 bars:3 bars:4",
        "circle:black pie3:black pie2:black pie1:black circle:hollow", "bars:0 bars:1 bars:2 bars:3 bars:4",
        "boxes:1111 boxes:1011 boxes:0011 boxes:0010 boxes:0000"
    ]
};

for (const id in sets) {
    document.getElementById(id).innerHTML = sets[id].map((row, i) =>
        `<button${id === "shapes" && i === 0 ? ' class="hot"' : ""} aria-label="${id} set ${i + 1}">${row.split(" ").map(draw).join("")}</button>`
    ).join("");
}
```
